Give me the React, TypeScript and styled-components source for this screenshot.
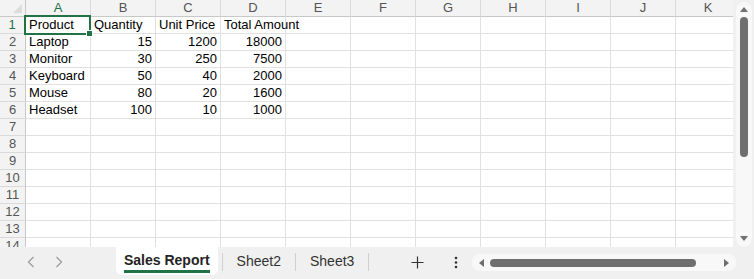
import styled, { createGlobalStyle } from "styled-components"

const GlobalStyle = createGlobalStyle`
  html, body {
    margin: 0;
    padding: 0;
    background: #f0f0f0;
    font-family: "Liberation Sans", Arial, sans-serif;
    overflow: hidden;
  }
`

const GREEN = "#217346"
const GRID = "#e1e1e1"

const Window = styled.div`
  width: 754px;
  height: 279px;
  display: flex;
  flex-direction: column;
  background: #f0f0f0;
`

const Main = styled.div`
  display: flex;
  height: 247px;
`

const SheetArea = styled.div`
  width: 733px;
  height: 247px;
  overflow: hidden;
  background: #fff;
`

const Grid = styled.div`
  display: grid;
  grid-template-columns: 26px repeat(11, 65px);
  grid-auto-rows: 17px;
  width: max-content;
`

const Corner = styled.div`
  position: relative;
  background: #f3f3f3;
  border-right: 1px solid #c8c8c8;
  border-bottom: 1px solid #c8c8c8;
  &::after {
    content: "";
    position: absolute;
    right: 3px;
    bottom: 3px;
    border-left: 9px solid transparent;
    border-bottom: 9px solid #dcdcdc;
  }
`

const ColHead = styled.div<{ $active?: boolean }>`
  box-sizing: border-box;
  background: #f3f3f3;
  border-right: 1px solid #dadada;
  border-bottom: ${p => (p.$active ? `2px solid ${GREEN}` : "1px solid #c8c8c8")};
  color: ${p => (p.$active ? GREEN : "#555")};
  font-size: 13px;
  text-align: center;
  line-height: 16px;
`

const RowHead = styled.div<{ $active?: boolean }>`
  box-sizing: border-box;
  background: #f3f3f3;
  border-right: ${p => (p.$active ? `2px solid ${GREEN}` : "1px solid #c8c8c8")};
  border-bottom: 1px solid #dadada;
  color: ${p => (p.$active ? GREEN : "#555")};
  font-size: 13px;
  text-align: center;
  line-height: 16px;
`

const Cell = styled.div<{ $num?: boolean; $selected?: boolean }>`
  position: relative;
  box-sizing: border-box;
  border-right: 1px solid ${GRID};
  border-bottom: 1px solid ${GRID};
  font-size: 13px;
  line-height: 16px;
  color: #000;
  white-space: nowrap;
  padding: 0 3px;
  text-align: ${p => (p.$num ? "right" : "left")};
  overflow: visible;
  z-index: ${p => (p.$selected ? 2 : 1)};
`

const Selection = styled.div`
  position: absolute;
  left: -2px;
  top: -2px;
  right: -1px;
  bottom: -2px;
  border: 2px solid ${GREEN};
  pointer-events: none;
  &::after {
    content: "";
    position: absolute;
    right: -4px;
    bottom: -4px;
    width: 5px;
    height: 5px;
    background: ${GREEN};
    border: 1px solid #fff;
  }
`

const VScroll = styled.div`
  width: 21px;
  display: flex;
  justify-content: center;
  padding-top: 2px;
`

const VTrack = styled.div`
  width: 16px;
  height: 245px;
  background: #f8f8f8;
  border-radius: 8px;
  display: flex;
  flex-direction: column;
  align-items: center;
`

const Arrow = styled.div<{ $dir: "up" | "down" | "left" | "right" }>`
  width: 0;
  height: 0;
  ${p =>
    p.$dir === "up"
      ? "border-left: 4px solid transparent; border-right: 4px solid transparent; border-bottom: 5px solid #6f6f6f;"
      : p.$dir === "down"
      ? "border-left: 4px solid transparent; border-right: 4px solid transparent; border-top: 5px solid #6f6f6f;"
      : p.$dir === "left"
      ? "border-top: 4px solid transparent; border-bottom: 4px solid transparent; border-right: 5px solid #6f6f6f;"
      : "border-top: 4px solid transparent; border-bottom: 4px solid transparent; border-left: 5px solid #6f6f6f;"}
`

const VThumb = styled.div`
  width: 8px;
  height: 140px;
  margin-top: 5px;
  border-radius: 4px;
  background: #6f6f6f;
`

const Spacer = styled.div<{ $size?: number }>`
  flex: ${p => (p.$size ? "none" : 1)};
  height: ${p => (p.$size ? `${p.$size}px` : "auto")};
`

const TabBar = styled.div`
  height: 32px;
  display: flex;
  align-items: flex-start;
`

const NavGroup = styled.div`
  width: 116px;
  display: flex;
  align-items: center;
  height: 30px;
  padding-left: 27px;
  gap: 20px;
  box-sizing: border-box;
`

const Tab = styled.div<{ $active?: boolean }>`
  height: 28px;
  box-sizing: border-box;
  display: flex;
  flex-direction: column;
  align-items: center;
  justify-content: center;
  padding: 0 ${p => (p.$active ? "8px" : "14px")};
  background: ${p => (p.$active ? "#fff" : "transparent")};
  border-radius: 0 0 6px 6px;
  font-size: 14px;
  font-weight: ${p => (p.$active ? 700 : 400)};
  color: ${p => (p.$active ? "#242424" : "#333")};
`

const TabLabel = styled.span<{ $active?: boolean }>`
  line-height: 16px;
  padding-bottom: ${p => (p.$active ? "2px" : "0")};
  border-bottom: ${p => (p.$active ? `3px solid ${GREEN}` : "none")};
  margin-top: ${p => (p.$active ? "3px" : "0")};
`

const Divider = styled.div<{ $gap?: number }>`
  width: 1px;
  height: 18px;
  margin-top: 6px;
  margin-left: ${p => p.$gap ?? 0}px;
  background: #cfcfcf;
`

const IconButton = styled.div<{ $gap: number }>`
  height: 30px;
  margin-left: ${p => p.$gap}px;
  display: flex;
  align-items: center;
  justify-content: center;
`

const HScroll = styled.div`
  margin-left: 14px;
  margin-top: 7px;
  width: 264px;
  height: 17px;
  background: #f8f8f8;
  border-radius: 8px;
  display: flex;
  align-items: center;
  padding: 0 7px 0 7px;
  box-sizing: border-box;
  gap: 6px;
`

const HThumb = styled.div`
  width: 206px;
  height: 8px;
  border-radius: 4px;
  background: #6f6f6f;
`

const columns = ["A", "B", "C", "D", "E", "F", "G", "H", "I", "J", "K"]

const data: (string | number)[][] = [
  ["Product", "Quantity", "Unit Price", "Total Amount"],
  ["Laptop", 15, 1200, 18000],
  ["Monitor", 30, 250, 7500],
  ["Keyboard", 50, 40, 2000],
  ["Mouse", 80, 20, 1600],
  ["Headset", 100, 10, 1000],
]

const ROWS = 14

export default function App() {
  return (
    <Window>
      <GlobalStyle />
      <Main>
        <SheetArea>
          <Grid>
            <Corner />
            {columns.map(c => (
              <ColHead key={c} $active={c === "A"}>{c}</ColHead>
            ))}
            {Array.from({ length: ROWS }, (_, r) => (
              <Row key={r} index={r} />
            ))}
          </Grid>
        </SheetArea>
        <VScroll>
          <VTrack>
            <Spacer $size={5} />
            <Arrow $dir="up" />
            <VThumb />
            <Spacer />
            <Arrow $dir="down" />
            <Spacer $size={6} />
          </VTrack>
        </VScroll>
      </Main>
      <TabBar>
        <NavGroup>
          <ChevronLeft />
          <ChevronRight />
        </NavGroup>
        <Tab $active>
          <TabLabel $active>Sales Report</TabLabel>
        </Tab>
        <Divider $gap={4} />
        <Tab>
          <TabLabel>Sheet2</TabLabel>
        </Tab>
        <Divider />
        <Tab>
          <TabLabel>Sheet3</TabLabel>
        </Tab>
        <Divider />
        <IconButton $gap={42}>
          <svg width="13" height="13" viewBox="0 0 13 13">
            <path d="M6.5 0.5v12M0.5 6.5h12" stroke="#333" strokeWidth="1.2" fill="none" />
          </svg>
        </IconButton>
        <IconButton $gap={30}>
          <svg width="4" height="13" viewBox="0 0 4 13">
            <circle cx="2" cy="2" r="1.3" fill="#333" />
            <circle cx="2" cy="6.5" r="1.3" fill="#333" />
            <circle cx="2" cy="11" r="1.3" fill="#333" />
          </svg>
        </IconButton>
        <HScroll>
          <Arrow $dir="left" />
          <HThumb />
          <Spacer />
          <Arrow $dir="right" />
        </HScroll>
      </TabBar>
    </Window>
  )
}

function Row({ index }: { index: number }) {
  const values = data[index] || []
  return (
    <>
      <RowHead $active={index === 0}>{index + 1}</RowHead>
      {columns.map((c, ci) => {
        const v = values[ci]
        const selected = index === 0 && ci === 0
        return (
          <Cell key={c} $num={typeof v === "number"} $selected={selected}>
            {v}
            {selected && <Selection />}
          </Cell>
        )
      })}
    </>
  )
}

function ChevronLeft() {
  return (
    <svg width="8" height="12" viewBox="0 0 8 12">
      <path d="M6.5 1L1.5 6l5 5" stroke="#9a9a9a" strokeWidth="1.2" fill="none" />
    </svg>
  )
}

function ChevronRight() {
  return (
    <svg width="8" height="12" viewBox="0 0 8 12">
      <path d="M1.5 1l5 5-5 5" stroke="#9a9a9a" strokeWidth="1.2" fill="none" />
    </svg>
  )
}
